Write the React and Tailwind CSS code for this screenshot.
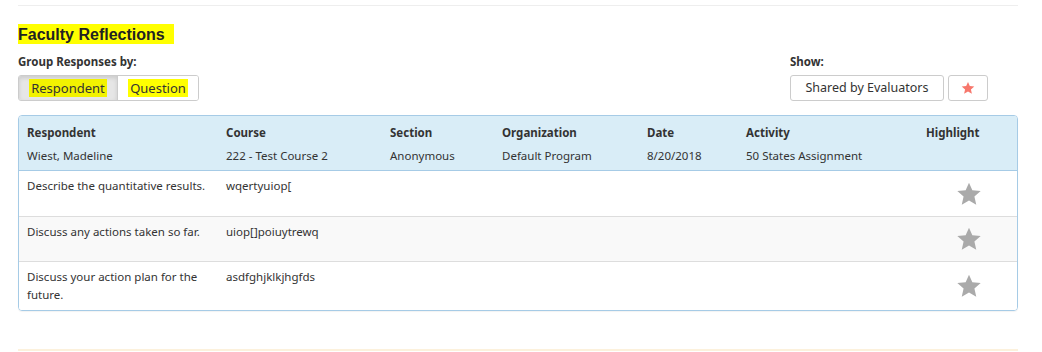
const rows = [
  { q: 'Describe the quantitative results.', a: 'wqertyuiop[' },
  { q: 'Discuss any actions taken so far.', a: 'uiop[]poiuytrewq' },
  { q: 'Discuss your action plan for the future.', a: 'asdfghjklkjhgfds' },
];

const cols = 'grid grid-cols-[199px_164px_112px_145px_99px_180px_1fr]';

const Star = ({ className }) => (
  <svg viewBox="0 0 24 24" className={className} fill="currentColor">
    <path d="M12 1.5l3.1 7.1 7.7.7-5.8 5.1 1.7 7.6L12 18l-6.7 4 1.7-7.6-5.8-5.1 7.7-.7z" />
  </svg>
);

const App = () => {
  return (
    <div className="w-[1042px] h-[352px] bg-white overflow-hidden text-[#333] font-['Noto_Sans',sans-serif]">
      <div className="mx-[18px] w-[1000px]">
        <div className="h-[6px] border-b border-[#eee]" />

        {/* Title */}
        <h2 className="mt-[19px] font-['Liberation_Sans',Arial,sans-serif] font-bold text-[16px] leading-[20px] text-[#222]">
          <span className="bg-[#ffff00] pr-[9px] pt-[2px] pb-[1px]">Faculty Reflections</span>
        </h2>

        <div className="mt-[9px] flex justify-between">
          <div>
            <div className="text-[11.5px] font-bold leading-[16px]">Group Responses by:</div>
            <div className="mt-[5px] flex w-fit rounded-[3px] border border-[#ccc] text-[13px] leading-[18px] overflow-hidden">
              <button className="h-[24px] w-[99px] bg-[#e6e6e6] shadow-[inset_0_2px_4px_rgba(0,0,0,0.12)] border-r border-[#ccc]">
                <span className="bg-[#f2f200] px-[2px]">Respondent</span>
              </button>
              <button className="h-[24px] w-[80px] bg-white">
                <span className="bg-[#ffff00] px-[2px]">Question</span>
              </button>
            </div>
          </div>

          <div className="mr-[30px]">
            <div className="text-[11.5px] font-bold leading-[16px]">Show:</div>
            <div className="mt-[5px] flex gap-[4px] text-[12.5px] leading-[18px]">
              <button className="h-[26px] w-[154px] rounded-[3px] border border-[#ccc] bg-white">
                Shared by Evaluators
              </button>
              <button className="h-[26px] w-[40px] rounded-[3px] border border-[#ccc] bg-white flex items-center justify-center">
                <Star className="w-[14px] h-[14px] text-[#f7776c]" />
              </button>
            </div>
          </div>
        </div>

        {/* Table panel */}
        <div className="mt-[14px] w-[1000px] rounded-[4px] border border-[#a6cbe6] overflow-hidden text-[11.5px] leading-[18px] shadow-[0_1px_1px_rgba(0,0,0,0.05)]">
          <div className={`${cols} bg-[#d9edf7] border-b border-[#a6cbe6] h-[55px] pt-[8px]`}>
            {['Respondent', 'Course', 'Section', 'Organization', 'Date', 'Activity', 'Highlight'].map((h) => (
              <div key={h} className="px-[8px] font-bold">{h}</div>
            ))}
            {['Wiest, Madeline', '222 - Test Course 2', 'Anonymous', 'Default Program', '8/20/2018', '50 States Assignment', ''].map((v, i) => (
              <div key={i} className="px-[8px] -mt-[1px]">{v}</div>
            ))}
          </div>

          {rows.map((r, i) => (
            <div
              key={i}
              className={`${cols} ${i === 1 ? 'bg-[#f9f9f9]' : 'bg-white'} ${i > 0 ? 'border-t border-[#ddd]' : ''} min-h-[45px] py-[6px]`}
            >
              <div className="px-[8px]">{r.q}</div>
              <div className="px-[8px]">{r.a}</div>
              <div />
              <div />
              <div />
              <div />
              <div className="flex items-center justify-center pl-[2px]">
                <Star className="w-[26px] h-[26px] text-[#aaa]" />
              </div>
            </div>
          ))}
        </div>

        <div className="mt-[38px] h-[4px] border-t-2 border-[#fcf1dc]" />
      </div>
    </div>
  );
};

export default App;
